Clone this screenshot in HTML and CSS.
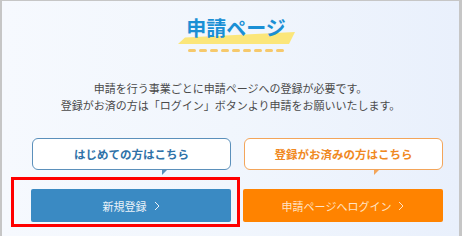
FILE: index.html
```html
<!DOCTYPE html>
<html lang="ja">
<head>
<meta charset="utf-8">
<title>申請ページ</title>
<link rel="stylesheet" href="styles.css">
</head>
<body>
<div class="frame">
  <div class="heading">
    <div class="title-wrap">
      <svg class="band" width="118" height="12" viewBox="0 0 118 12" aria-hidden="true">
        <polygon points="0,12 7,5.5 117,0 111,12" fill="#fbe67a"/>
      </svg>
      <h1 class="title">申請ページ</h1>
    </div>
    <div class="dashes"><span></span><span></span><span></span><span></span><span></span><span></span><span></span><span></span><span></span></div>
  </div>
  <div class="lead">
    <p class="lead-line">申請を行う事業ごとに申請ページへの登録が必要です。</p>
    <p class="lead-line">登録がお済の方は「ログイン」ボタンより申請をお願いいたします。</p>
  </div>
  <div class="choices">
    <div class="choice">
      <div class="bubble bubble-blue">はじめての方はこちら</div>
      <a class="btn btn-blue" href="#">新規登録<svg class="chev" width="6" height="10" viewBox="0 0 6 10"><polyline points="1,1 5,5 1,9" fill="none" stroke="currentColor" stroke-width="1"/></svg></a>
    </div>
    <div class="choice">
      <div class="bubble bubble-orange">登録がお済みの方はこちら</div>
      <a class="btn btn-orange" href="#">申請ページへログイン<svg class="chev" width="6" height="10" viewBox="0 0 6 10"><polyline points="1,1 5,5 1,9" fill="none" stroke="currentColor" stroke-width="1"/></svg></a>
    </div>
  </div>
  <div class="highlight"></div>
</div>
</body>
</html>
```

FILE: styles.css
```css
html, body {
  margin: 0;
  padding: 0;
}
body {
  font-family: "Noto Sans CJK JP", "Noto Sans", sans-serif;
  width: 462px;
  height: 236px;
  overflow: hidden;
}
.frame {
  position: relative;
  box-sizing: border-box;
  width: 462px;
  height: 236px;
  border-left: 2px solid #c6c6c6;
  border-top: 1px solid #c6c6c6;
  border-right: 3px solid #c6c6c6;
  background: linear-gradient(90deg, #f6f9fe 0%, #f1f6fd 50%, #e9f0fc 100%);
}
.heading {
  display: flex;
  flex-direction: column;
  align-items: center;
  padding-left: 11px;
  padding-top: 15px;
}
.title-wrap {
  position: relative;
  height: 24px;
}
.band {
  position: absolute;
  left: -8px;
  top: 16px;
  z-index: 0;
}
.title {
  position: relative;
  z-index: 1;
  margin: 0;
  font-size: 20px;
  line-height: 24px;
  height: 24px;
  font-weight: 700;
  color: #1a8fd5;
}
.dashes {
  display: flex;
  gap: 3.4px;
  margin-top: 9px;
  height: 3px;
}
.dashes span {
  width: 7.6px;
  height: 3px;
  border-radius: 1.5px;
  background: #f6c96c;
}
.lead {
  margin-top: 28px;
  display: flex;
  flex-direction: column;
  align-items: center;
}
.lead-line {
  margin: 0;
  height: 17px;
  font-size: 11px;
  line-height: 17px;
  color: #4a4a4a;
  white-space: nowrap;
}
.choices {
  display: flex;
  gap: 12px;
  padding-left: 29px;
  margin-top: 24px;
}
.choice {
  width: 200px;
  display: flex;
  flex-direction: column;
}
.bubble {
  position: relative;
  box-sizing: border-box;
  height: 32px;
  margin-left: 1px;
  border-radius: 6px;
  background: #fff;
  display: flex;
  align-items: center;
  justify-content: center;
  font-size: 11.5px;
  font-weight: 700;
  margin-bottom: 19px;
}
.bubble::after {
  content: "";
  position: absolute;
  left: 129px;
  top: 100%;
  width: 0;
  height: 0;
  border-top: 6px solid currentColor;
  border-right: 6px solid transparent;
}
.bubble-blue {
  border: 1.5px solid #5b90bb;
  color: #2f72a8;
}
.bubble-blue::after {
  border-top-color: #5b90bb;
}
.bubble-orange {
  border: 1.5px solid #f3a55a;
  color: #f0891f;
}
.bubble-orange::after {
  border-top-color: #f3a55a;
}
.btn {
  height: 33px;
  border-radius: 2px;
  display: flex;
  align-items: center;
  justify-content: center;
  gap: 7px;
  font-size: 11px;
  text-decoration: none;
}
.btn-blue {
  background: #3a8ac3;
  color: #eaf2f9;
}
.btn-orange {
  background: #ff8300;
  color: #ffe3c6;
}
.chev {
  display: block;
}
.highlight {
  position: absolute;
  left: 9px;
  top: 176px;
  width: 229px;
  height: 50px;
  box-sizing: border-box;
  border: 3px solid #ff0000;
}
```
